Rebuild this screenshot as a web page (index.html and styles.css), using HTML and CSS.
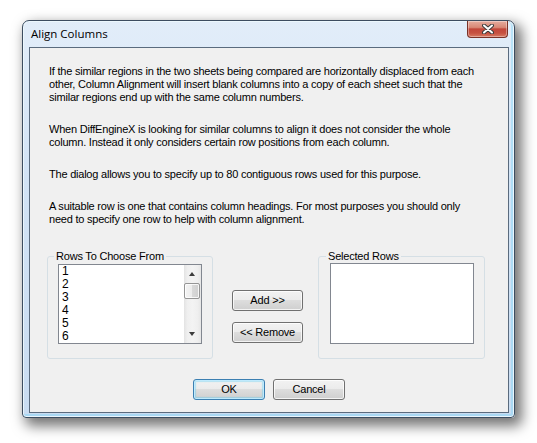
FILE: index.html
```html
<!DOCTYPE html>
<html>
<head>
<meta charset="utf-8">
<link rel="stylesheet" href="styles.css">
</head>
<body>
<div class="window">
  <div class="titlebar">
    <span class="title">Align Columns</span>
    <div class="close">
      <svg width="12" height="10" viewBox="0 0 12 10">
        <path d="M2 1.5 L10 8.5 M10 1.5 L2 8.5" stroke="#3b3b3b" stroke-width="4" stroke-linecap="round"/>
        <path d="M2 1.5 L10 8.5 M10 1.5 L2 8.5" stroke="#ffffff" stroke-width="2" stroke-linecap="round"/>
      </svg>
    </div>
  </div>
  <div class="client">
    <div class="text">
      <p>If the similar regions in the two sheets being compared are horizontally displaced from each<br>other, Column Alignment will insert blank columns into a copy of each sheet such that the<br>similar regions end up with the same column numbers.</p>
      <p>When DiffEngineX is looking for similar columns to align it does not consider the whole<br>column. Instead it only considers certain row positions from each column.</p>
      <p>The dialog allows you to specify up to 80 contiguous rows used for this purpose.</p>
      <p>A suitable row is one that contains column headings. For most purposes you should only<br>need to specify one row to help with column alignment.</p>
    </div>
    <div class="pickers">
      <fieldset class="group group-left">
        <legend>Rows To Choose From</legend>
        <div class="listbox">
          <div class="items">
            <div class="item">1</div>
            <div class="item">2</div>
            <div class="item">3</div>
            <div class="item">4</div>
            <div class="item">5</div>
            <div class="item">6</div>
          </div>
          <div class="scrollbar">
            <div class="arrow arrow-up"></div>
            <div class="thumb"></div>
            <div class="track"></div>
            <div class="arrow arrow-down"></div>
          </div>
        </div>
      </fieldset>
      <div class="movers">
        <button class="btn">Add &gt;&gt;</button>
        <button class="btn">&lt;&lt; Remove</button>
      </div>
      <fieldset class="group group-right">
        <legend>Selected Rows</legend>
        <div class="listbox listbox-empty"></div>
      </fieldset>
    </div>
    <div class="actions">
      <button class="btn btn-default">OK</button>
      <button class="btn">Cancel</button>
    </div>
  </div>
</div>
</body>
</html>
```

FILE: styles.css
```css
html, body {
  margin: 0;
  padding: 0;
  background: #ffffff;
}
body {
  width: 537px;
  height: 443px;
  overflow: hidden;
  font-family: "Liberation Sans", Arial, sans-serif;
  font-size: 11px;
  color: #000;
}
.window {
  box-sizing: border-box;
  margin: 20px 0 0 22px;
  width: 493px;
  height: 398px;
  border: 1px solid #3d4d60;
  border-radius: 7px 7px 4px 4px;
  background: linear-gradient(180deg, #e2edf9 0%, #d2e3f5 40%, #c9dcf1 100%);
  box-shadow: inset 0 0 0 1px rgba(255,255,255,0.75), inset -1px -1px 0 2px rgba(110,210,245,0.35), 5px 6px 13px 2px rgba(0,0,0,0.55);
  display: flex;
  flex-direction: column;
}
.titlebar {
  height: 26px;
  display: flex;
  align-items: flex-start;
  justify-content: space-between;
  padding-left: 8px;
}
.title {
  font-family: "Open Sans", "Noto Sans", sans-serif;
  font-size: 11.5px;
  line-height: 26px;
  color: #000;
}
.close {
  box-sizing: border-box;
  width: 41px;
  height: 17px;
  margin-right: 6px;
  border: 1px solid #7a3227;
  border-top: none;
  border-radius: 0 0 4px 4px;
  background: linear-gradient(180deg, #e6ac9e 0%, #d98876 40%, #c2473a 50%, #c65140 75%, #d87a63 100%);
  box-shadow: inset 0 0 0 1px rgba(255,255,255,0.35);
  display: flex;
  align-items: center;
  justify-content: center;
}
.close svg { display: block; }
.client {
  box-sizing: border-box;
  margin: 0 5px 0 6px;
  height: 366px;
  border: 1px solid #5a6b7e;
  background: #f0f0f0;
  padding: 17px 17px 0 17px;
  display: flex;
  flex-direction: column;
}
.text {
  padding-left: 2px;
}
.text p {
  margin: 0 0 19px 0;
  line-height: 13px;
  white-space: nowrap;
  letter-spacing: -0.22px;
}
.text p:last-child { margin-bottom: 0; }
.pickers {
  display: flex;
  align-items: flex-start;
  margin-top: 24px;
}
.group {
  box-sizing: border-box;
  margin: 0;
  min-width: 0;
  border: 1px solid #d5dfe5;
  border-radius: 3px;
  padding: 0 10px 14px 10px;
}
.group legend {
  padding: 0 2px;
  margin-left: -4px;
  line-height: 13px;
  font-size: 11px;
  letter-spacing: -0.2px;
}
.group-left { width: 166px; }
.group-right { width: 167px; padding-left: 11px; padding-right: 10px; }
.listbox {
  box-sizing: border-box;
  height: 80px;
  border: 1px solid #828790;
  background: #fff;
  display: flex;
  margin-top: 1px;
}
.listbox-empty { margin-top: 0; height: 81px; }
.items {
  flex: 1;
  padding-left: 3px;
}
.item {
  line-height: 13px;
  height: 13px;
  font-size: 12px;
}
.scrollbar {
  width: 17px;
  display: flex;
  flex-direction: column;
  background: linear-gradient(90deg, #e3e3e3 0%, #efefef 20%, #f3f3f3 50%, #efefef 80%, #e6e6e6 100%);
}
.arrow {
  height: 17px;
  position: relative;
}
.arrow::after {
  content: "";
  position: absolute;
  left: 5px;
  width: 0;
  height: 0;
  border-left: 3.5px solid transparent;
  border-right: 3.5px solid transparent;
}
.arrow-up::after {
  top: 7px;
  border-bottom: 4px solid #3c3c3c;
}
.arrow-down::after {
  top: 6px;
  border-top: 4px solid #3c3c3c;
}
.thumb {
  box-sizing: border-box;
  height: 16px;
  margin: 1px 1px 0 0;
  border: 1px solid #959595;
  border-radius: 2px;
  background: linear-gradient(90deg, #f4f4f4 0%, #ececec 50%, #d9d9d9 51%, #cfcfcf 100%);
  box-shadow: inset 0 0 0 1px rgba(255,255,255,0.8);
}
.track { flex: 1; }
.movers {
  display: flex;
  flex-direction: column;
  gap: 11px;
  padding-top: 40px;
  margin: 0 15px 0 19px;
}
.btn {
  box-sizing: border-box;
  width: 72px;
  height: 21px;
  padding: 0;
  border: 1px solid #707070;
  border-radius: 3px;
  background: linear-gradient(180deg, #f2f2f2 0%, #ebebeb 49%, #dddddd 50%, #cfcfcf 100%);
  box-shadow: inset 0 0 0 1px rgba(255,255,255,0.75);
  font-family: "Liberation Sans", Arial, sans-serif;
  font-size: 11px;
  letter-spacing: -0.2px;
  color: #000;
  line-height: 19px;
  text-align: center;
}
.movers .btn { width: 71px; }
.btn-default {
  border-color: #3c7fb1;
  box-shadow: inset 0 0 0 1px #bfeafd, inset 0 0 1px 2px rgba(72,200,245,0.35);
}
.actions {
  display: flex;
  justify-content: center;
  gap: 8px;
  margin-top: 20px;
}
```
